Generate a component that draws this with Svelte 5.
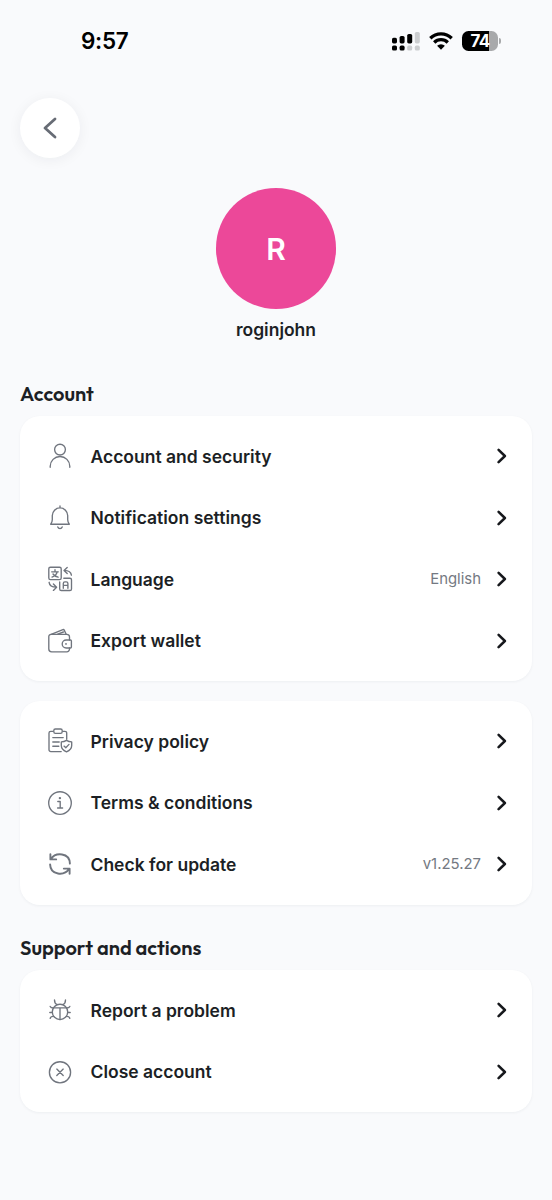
<script lang="ts">
	type Item = { icon: string; label: string; value?: string };
	type Section = { title?: string; items: Item[] };

	const sections: Section[] = [
		{
			title: 'Account',
			items: [
				{ icon: 'user', label: 'Account and security' },
				{ icon: 'bell', label: 'Notification settings' },
				{ icon: 'language', label: 'Language', value: 'English' },
				{ icon: 'wallet', label: 'Export wallet' }
			]
		},
		{
			items: [
				{ icon: 'policy', label: 'Privacy policy' },
				{ icon: 'info', label: 'Terms & conditions' },
				{ icon: 'refresh', label: 'Check for update', value: 'v1.25.27' }
			]
		},
		{
			title: 'Support and actions',
			items: [
				{ icon: 'bug', label: 'Report a problem' },
				{ icon: 'close', label: 'Close account' }
			]
		}
	];
</script>

<main class="screen">
	<header class="status-bar">
		<span class="time">9:57</span>
		<div class="indicators">
			<!-- dual SIM signal -->
			<svg width="28" height="20" viewBox="0 0 28 20">
				<rect x="0" y="6.8" width="5" height="5.6" rx="1.6" />
				<rect x="7.6" y="5" width="5" height="7.4" rx="1.6" />
				<rect x="15.2" y="3" width="5" height="9.4" rx="1.6" />
				<rect class="dim" x="22.8" y="1" width="5" height="11.4" rx="1.6" />
				<rect x="0" y="14.6" width="5" height="5" rx="1.6" />
				<rect x="7.6" y="14.6" width="5" height="5" rx="1.6" />
				<rect class="dim" x="15.2" y="14.6" width="5" height="5" rx="1.6" />
				<rect class="dim" x="22.8" y="14.6" width="5" height="5" rx="1.6" />
			</svg>
			<svg class="wifi" width="24" height="18" viewBox="0 0 24 18">
				<path d="M1.3 6.2a15.4 15.4 0 0 1 21.4 0M5.2 10.5a9.7 9.7 0 0 1 13.6 0" />
				<path class="fill" d="M12 17.8l-3.9-4a5.6 5.6 0 0 1 7.8 0z" />
			</svg>
			<div class="battery">
				<div class="level"><span>74</span></div>
				<i></i>
			</div>
		</div>
	</header>

	<button class="back" aria-label="Back">
		<svg width="16" height="22" viewBox="0 0 16 22">
			<path d="M13 2L3 11l10 9" />
		</svg>
	</button>

	<div class="profile">
		<div class="avatar">R</div>
		<div class="username">roginjohn</div>
	</div>

	{#each sections as section}
		<section class:titled={section.title}>
			{#if section.title}
				<h2>{section.title}</h2>
			{/if}
			<div class="card">
				{#each section.items as item}
					<button class="row">
						<svg class="icon" width="26" height="26" viewBox="0 0 26 26">
							{#if item.icon === 'user'}
								<circle cx="13" cy="6.6" r="5.4" />
								<path d="M3.2 24.2v-.9a9.8 9.8 0 0 1 19.6 0v.9" />
							{:else if item.icon === 'bell'}
								<path d="M13 1v1.8M5.3 10.6a7.7 7.7 0 0 1 15.4 0v4.2c0 1.8.6 3 1.6 4.4H3.7c1-1.4 1.6-2.6 1.6-4.4z" />
								<path d="M10.8 22a2.3 2.3 0 0 0 4.4 0" />
							{:else if item.icon === 'language'}
								<rect x="1.8" y="1.2" width="12.4" height="12.4" rx="1.6" />
								<path d="M8 3.7v2M4.7 5.8h6.6M10.2 5.8c-.7 2.7-2.5 4.3-5.2 5.3M6 8c1.2 1.6 2.8 2.6 5.1 3.2" />
								<path d="M16.8 12.2h6.1a1.6 1.6 0 0 1 1.6 1.6v9.1a1.6 1.6 0 0 1-1.6 1.6h-8.6a1.6 1.6 0 0 1-1.6-1.6v-7" />
								<path d="M16.3 22.2v-4.8a1.6 1.6 0 0 1 1.6-1.6h1.4a1.6 1.6 0 0 1 1.6 1.6v4.8M16.3 19.4h4.6" />
								<path d="M24.4 9.2c-.4-3.2-3-4.7-7.2-4.8M20.2 1.4l-3.2 3 3.2 3.2" />
								<path d="M2.1 16.3c.4 3.3 2.8 4.8 7.2 4.9M6.4 18l3.2 3.2-3.2 3.2" />
							{:else if item.icon === 'wallet'}
								<path d="M22.5 12v-3a2.7 2.7 0 0 0-2.7-2.7H4a2.2 2.2 0 0 0-2.2 2.2V21A2.8 2.8 0 0 0 4.6 23.8h15.2a2.7 2.7 0 0 0 2.7-2.7V20" />
								<path d="M23.4 12h-4.2a4 4 0 0 0 0 8h4.2a1 1 0 0 0 1-1v-6a1 1 0 0 0-1-1z" />
								<path d="M4.2 6.3l11.7-4.7a1 1 0 0 1 1.3.5L19.2 6.3M10.8 6.2l5.6-2.2" />
								<circle class="dot" cx="19" cy="15.9" r=".9" />
							{:else if item.icon === 'policy'}
								<path d="M6.2 3.3H3.8A1.8 1.8 0 0 0 2 5.1v16.7a1.8 1.8 0 0 0 1.8 1.8h10.4M15.8 3.3h2.1a1.8 1.8 0 0 1 1.8 1.8v6.2" />
								<path d="M8.4 1h5.2a1.6 1.6 0 0 1 1.6 1.6v1.2a1.6 1.6 0 0 1-1.6 1.6H8.4a1.6 1.6 0 0 1-1.6-1.6V2.6A1.6 1.6 0 0 1 8.4 1z" />
								<path d="M5.8 9.6h10.4M5.8 14h6.4M5.8 18.2h6" />
								<path d="M19.5 12.4c1.6 1 3.2 1.5 5.2 1.5v3.6c0 3-2 5-5.2 6.3-3.2-1.3-5.2-3.3-5.2-6.3v-3.6c2 0 3.6-.5 5.2-1.5z" />
								<path d="M17 18.1l1.8 1.7 3.2-3.4" />
							{:else if item.icon === 'info'}
								<circle cx="13" cy="13" r="11.3" />
								<circle class="dot" cx="12.9" cy="8.1" r="1.2" />
								<path d="M10.8 11.5h2.4v6.5M10.6 18h5" />
							{:else if item.icon === 'refresh'}
								<g class="bold">
									<path d="M3.4 3.2v5.2h5.8M3.8 8.2C8.6.8 22.6 1.5 22.9 12.6" />
									<path d="M22.6 22.8v-5.2h-5.8M22.2 17.8C17.4 25.2 3.4 24.5 3.1 13.4" />
								</g>
							{:else if item.icon === 'bug'}
								<circle cx="13" cy="14.9" r="7.7" />
								<path d="M6.3 10.9h13.4M13 10.9v11.7M7.5 3c0 2.8.8 4 2.8 4.6M18.5 3c0 2.8-.8 4-2.8 4.6" />
								<path d="M3.2 9.4c.5 1.2 1.4 1.5 3.1 1.5M22.8 9.4c-.5 1.2-1.4 1.5-3.1 1.5M2.8 15.5h2.5M20.7 15.5h2.5M3.2 21.3c.4-1.4 1.4-2 3.4-1.9M22.8 21.3c-.4-1.4-1.4-2-3.4-1.9" />
							{:else if item.icon === 'close'}
								<circle cx="13" cy="13.3" r="10.6" />
								<path d="M9.8 10.1l6.4 6.4M16.2 10.1l-6.4 6.4" />
							{/if}
						</svg>
						<span class="label">{item.label}</span>
						{#if item.value}
							<span class="value">{item.value}</span>
						{/if}
						<svg class="chevron" width="10" height="16" viewBox="0 0 10 16">
							<path d="M1.6 1.8L7.9 8l-6.3 6.2" />
						</svg>
					</button>
				{/each}
			</div>
		</section>
	{/each}
</main>

<style>
	:global(body) {
		background: #f9fafc;
	}

	.screen {
		box-sizing: border-box;
		height: 1200px;
		padding: 0 20px;
		background: #f9fafc;
		color: #1c1f25;
		font-family: Inter, 'Liberation Sans', sans-serif;
		overflow: hidden;
	}

	button {
		border: none;
		font: inherit;
		color: inherit;
		cursor: pointer;
	}

	svg {
		display: block;
		flex: none;
	}

	svg path {
		fill: none;
		stroke-linecap: round;
		stroke-linejoin: round;
	}

	.status-bar {
		display: flex;
		justify-content: space-between;
		align-items: center;
		height: 82px;
		padding: 0 31px 0 61px;
		color: #000;
	}

	.time {
		margin-top: -1px;
		font-size: 22.5px;
		font-weight: 600;
		letter-spacing: -0.3px;
	}

	.indicators {
		display: flex;
		align-items: center;
	}

	.dim {
		fill: #ccced0;
	}

	.wifi {
		margin: 0 9px;
	}

	.wifi path {
		stroke: #000;
		stroke-width: 3.3;
		stroke-linecap: butt;
	}

	.wifi .fill {
		fill: #000;
		stroke: none;
	}

	.battery {
		display: flex;
		align-items: center;
		gap: 1px;
	}

	.level {
		width: 36px;
		height: 20px;
		border-radius: 6.5px;
		background: linear-gradient(to right, #000 27px, #a8a9ab 27px);
		color: #fff;
		font-size: 17px;
		font-weight: 700;
		line-height: 20px;
		text-align: center;
		letter-spacing: -0.8px;
	}

	.battery i {
		width: 2px;
		height: 6px;
		border-radius: 0 2px 2px 0;
		background: #a8a9ab;
	}

	.back {
		display: flex;
		align-items: center;
		justify-content: center;
		width: 60px;
		height: 60px;
		margin-top: 16px;
		padding: 0;
		border-radius: 50%;
		background: #fff;
		box-shadow: 0 2px 14px rgba(20, 30, 50, 0.06);
	}

	.back path {
		stroke: #676c75;
		stroke-width: 2.8;
	}

	.profile {
		display: flex;
		flex-direction: column;
		align-items: center;
		margin-top: 30.3px;
	}

	.avatar {
		width: 120.5px;
		height: 120.5px;
		border-radius: 50%;
		background: #ec4899;
		color: #fff;
		font-size: 30px;
		font-weight: 600;
		line-height: 122px;
		text-align: center;
	}

	.username {
		margin-top: 9.2px;
		font-size: 17.5px;
		font-weight: 600;
		line-height: 24px;
	}

	section {
		margin-top: 20.1px;
	}

	section.titled {
		margin-top: 30.3px;
	}

	.profile + section.titled {
		margin-top: 39px;
	}

	h2 {
		margin: 0 0 10px;
		font-family: Outfit, Lato, sans-serif;
		font-size: 20px;
		font-weight: 600;
		line-height: 25px;
	}

	.card {
		padding: 9.6px 0 9.4px;
		border-radius: 20px;
		background: #fff;
		box-shadow: 0 1px 3px rgba(20, 30, 50, 0.05);
	}

	.row {
		display: flex;
		align-items: center;
		width: 100%;
		height: 61.5px;
		padding: 0 25px 0 27px;
		background: none;
		text-align: left;
	}

	.icon path,
	.icon circle,
	.icon rect {
		fill: none;
		stroke: #70757e;
		stroke-width: 1.35;
	}

	.icon .dot {
		fill: #70757e;
		stroke: none;
	}

	.icon .bold path {
		stroke-width: 1.9;
	}

	.label {
		flex: 1;
		margin-left: 17.5px;
		font-size: 17.5px;
		font-weight: 600;
	}

	.value {
		margin-right: 16px;
		color: #747982;
		font-size: 14.9px;
	}

	.chevron path {
		stroke: #16181c;
		stroke-width: 2.5;
	}
</style>
